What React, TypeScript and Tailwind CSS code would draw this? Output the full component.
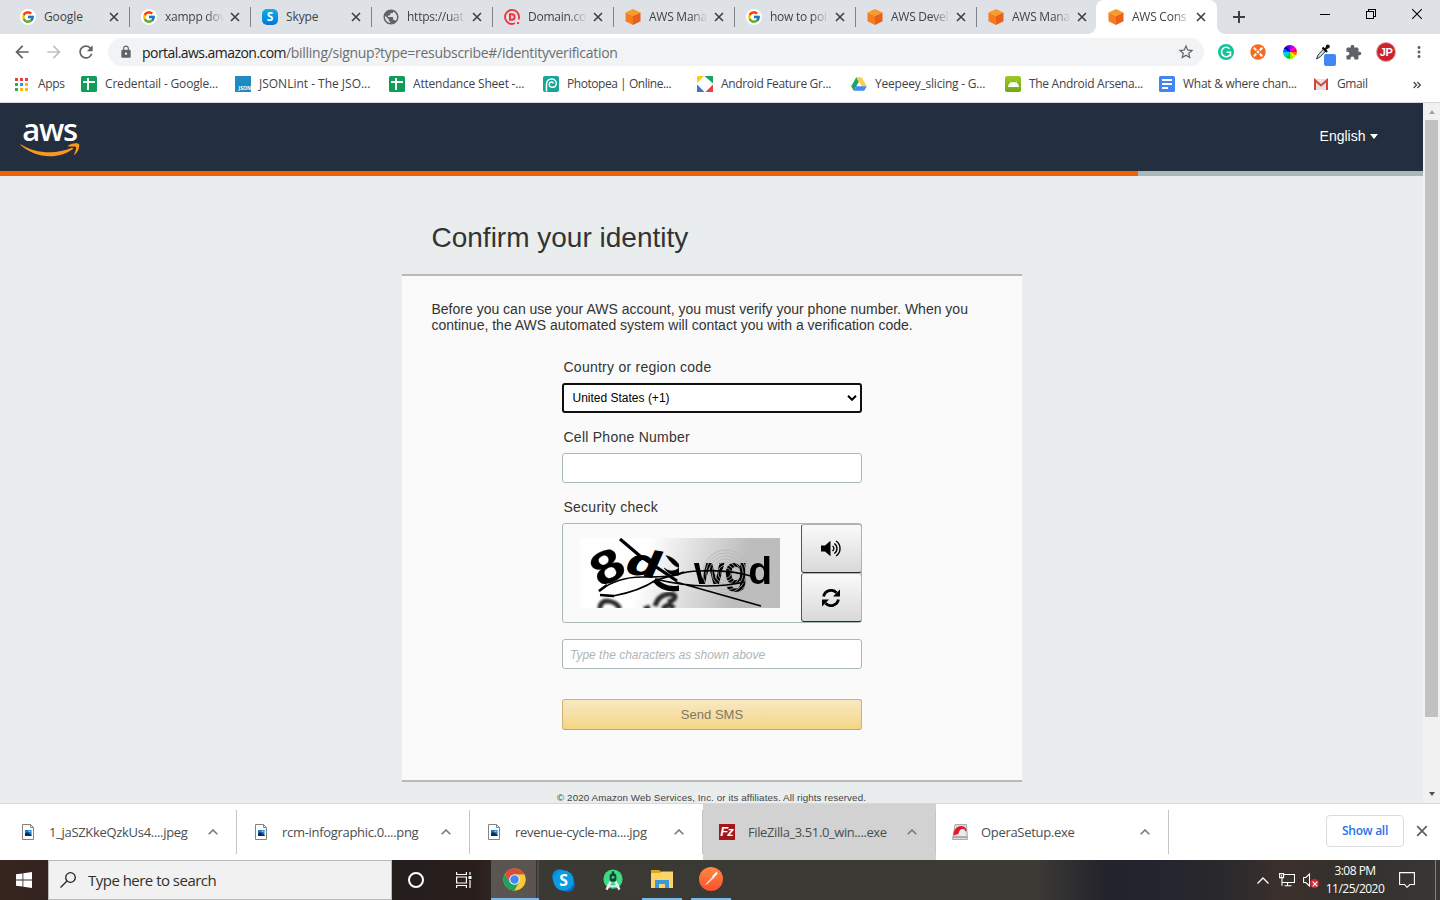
import type { ReactNode } from 'react';
import { FcGoogle } from 'react-icons/fc';
import { FaAndroid } from 'react-icons/fa';
import {
  MdArrowBack,
  MdArrowForward,
  MdRefresh,
  MdLock,
  MdStarBorder,
  MdExtension,
  MdMoreVert,
  MdPublic,
} from 'react-icons/md';

/* ---------- small icons ---------- */

function GoogleIcon() {
  return (
    <span className="flex size-4 items-center justify-center rounded-full bg-white">
      <FcGoogle className="size-[14px]" />
    </span>
  );
}

function SkypeIcon({ className = 'size-4' }: { className?: string }) {
  return (
    <svg viewBox="0 0 24 24" className={className}>
      <circle cx="8" cy="8" r="7.800" fill="#0c8ad8" />
      <circle cx="16.200" cy="16.200" r="7.600" fill="#0a6fc2" />
      <circle cx="12" cy="12" r="10.600" fill="#0a9be4" />
      <text x="12" y="17.800" textAnchor="middle" fontFamily="Open Sans, sans-serif" fontWeight="700" fontSize="16.500" fill="#fff">
        S
      </text>
    </svg>
  );
}

function SkypeTabIcon() {
  return (
    <span className="flex size-4 items-center justify-center rounded-[5px] bg-gradient-to-b from-[#12aeea] to-[#0578d4] font-['Open_Sans',sans-serif] text-[12px] leading-none font-bold text-white">
      S
    </span>
  );
}

function DomainIcon() {
  return (
    <svg viewBox="0 0 16 16" className="size-4">
      <path d="M11 14.300A7 7 0 1 1 15 8.500v2" fill="none" stroke="#f0333f" strokeWidth="1.800" />
      <path d="M6 5.200h1.800a2.800 2.800 0 0 1 0 5.600H6z" fill="none" stroke="#f0333f" strokeWidth="2" />
      <rect x="13" y="13" width="2" height="2" fill="#f0333f" />
    </svg>
  );
}

function CubeIcon() {
  return (
    <svg viewBox="0 0 16 16" className="size-4">
      <path d="M8 0l7.500 3.500L8 7 .5 3.500z" fill="#fa9a2c" />
      <path d="M.5 3.500L8 7v9L.5 12.300z" fill="#f47d20" />
      <path d="M15.500 3.500L8 7v9l7.500-3.700z" fill="#e8611c" />
    </svg>
  );
}

function SheetsIcon() {
  return (
    <svg viewBox="0 0 16 16" className="size-4">
      <rect width="16" height="16" rx="1.500" fill="#0f9d58" />
      <path d="M2 6h12M7 2v12" stroke="#fff" strokeWidth="2" />
    </svg>
  );
}

function JsonIcon() {
  return (
    <span className="flex size-4 items-end justify-end bg-[#1e8bc3] font-['Open_Sans',sans-serif] text-[5px] leading-[7px] font-bold text-white">
      JSON
    </span>
  );
}

function PhotopeaIcon() {
  return (
    <svg viewBox="0 0 16 16" className="size-4">
      <rect width="16" height="16" rx="2" fill="#18a497" />
      <path
        d="M3.500 15.500V8.300C3.500 4.800 5.800 3 8.600 3c2.700 0 4.700 1.800 4.700 4.300 0 2.400-1.800 4-4 4-1.900 0-3-1.200-3-2.800 0-1.400 1-2.400 2.300-2.400 1 0 1.600.7 1.600 1.500"
        fill="none"
        stroke="#fff"
        strokeWidth="1.500"
      />
    </svg>
  );
}

function FeatureIcon() {
  return (
    <svg viewBox="0 0 16 16" className="size-4">
      <path d="M1 0h6L0 7V1z" fill="#fbc91b" />
      <path d="M7.500 0H16v7.500z" fill="#1da260" />
      <path d="M0 8.500L7.500 16H0z" fill="#3f74c4" />
      <path d="M16 8.500V16H8.500z" fill="#ee3d3d" />
    </svg>
  );
}

function DriveIcon() {
  return (
    <svg viewBox="0 0 16 16" className="size-4">
      <path d="M5.300 1.200L.2 10.300l2.500 4.500L7.900 5.700z" fill="#1da462" />
      <path d="M5.300 1.200h5.300l5.200 9.100h-5.200z" fill="#ffcf48" />
      <path d="M5.300 10.300h10.500l-2.600 4.500H2.700z" fill="#4688f4" />
    </svg>
  );
}

function ArsenalIcon() {
  return (
    <span className="flex size-4 items-center justify-center rounded-[2px] bg-gradient-to-b from-[#9cca2b] to-[#76a70f]">
      <FaAndroid className="size-[11px] text-white" />
    </span>
  );
}

function DocsIcon() {
  return (
    <svg viewBox="0 0 16 16" className="size-4">
      <rect width="16" height="16" rx="1.500" fill="#4285f4" />
      <path d="M3 4h10M3 8h10M3 12h6" stroke="#fff" strokeWidth="2" />
    </svg>
  );
}

function GmailIcon() {
  return (
    <svg viewBox="0 0 16 16" className="size-4">
      <path d="M1 3h14v11H1z" fill="#e4e2e2" />
      <path d="M2 14V4.300L8 9.500l6-5.200V14" fill="none" stroke="#d44638" strokeWidth="2" />
    </svg>
  );
}

function AppsIcon() {
  const colors = ['#ea4335', '#ea4335', '#ea4335', '#34a853', '#4285f4', '#fbbc05', '#34a853', '#fbbc05', '#fbbc05'];
  return (
    <svg viewBox="0 0 13 13" className="size-[13px]">
      {colors.map((c, i) => (
        <rect key={i} x={(i % 3) * 5} y={Math.floor(i / 3) * 5} width="3" height="3" fill={c} />
      ))}
    </svg>
  );
}

function CloseX({ className }: { className: string }) {
  return (
    <svg viewBox="0 0 10 10" className={className} fill="none" stroke="currentColor">
      <path d="M1 1l8 8M9 1l-8 8" />
    </svg>
  );
}

/* ---------- browser chrome ---------- */

type TabInfo = { title: string; icon: ReactNode; active?: boolean; divider?: boolean };

const tabs: TabInfo[] = [
  { title: 'Google', icon: <GoogleIcon /> },
  { title: 'xampp dov', icon: <GoogleIcon />, divider: true },
  { title: 'Skype', icon: <SkypeTabIcon />, divider: true },
  { title: 'https://uat', icon: <MdPublic className="size-[18px] -m-px text-[#5f6368]" />, divider: true },
  { title: 'Domain.co', icon: <DomainIcon />, divider: true },
  { title: 'AWS Mana', icon: <CubeIcon />, divider: true },
  { title: 'how to poi', icon: <GoogleIcon />, divider: true },
  { title: 'AWS Devel', icon: <CubeIcon />, divider: true },
  { title: 'AWS Mana', icon: <CubeIcon />, divider: true },
  { title: 'AWS Cons', icon: <CubeIcon />, active: true },
];

function Tab({ tab }: { tab: TabInfo }) {
  const short = tab.title.length < 8;
  return (
    <div className={`relative flex h-[34px] w-[121px] shrink-0 items-center ${tab.active ? '-ml-px rounded-t-lg bg-white' : ''}`}>
      {tab.active && (
        <>
          <span className="absolute bottom-0 -left-2 size-2 bg-[radial-gradient(circle_at_0_0,#dee1e6_7.500px,#fff_8px)]" />
          <span className="absolute -right-2 bottom-0 size-2 bg-[radial-gradient(circle_at_100%_0,#dee1e6_7.500px,#fff_8px)]" />
        </>
      )}
      <span className={`h-5 w-px ${tab.divider ? 'bg-[#808389]' : ''}`} />
      <span className="ml-[11px] flex size-4 shrink-0 items-center justify-center">{tab.icon}</span>
      <span
        className={`ml-2 w-[59px] text-[12px] whitespace-nowrap text-[#3f4347] ${
          short ? 'tracking-[-0.100px]' : 'tracking-[-0.250px] [mask-image:linear-gradient(to_right,#000_70%,transparent)]'
        }`}
      >
        {tab.title}
      </span>
      <CloseX className={`size-[10px] stroke-[1.600] text-[#3c4043] ${tab.active ? 'ml-[5px]' : 'ml-[6px]'}`} />
    </div>
  );
}

function TabStrip() {
  return (
    <div className="flex h-[34px] items-center bg-[#dee1e6] pl-2">
      {tabs.map((t, i) => (
        <Tab key={i} tab={t} />
      ))}
      <svg viewBox="0 0 12 12" className="ml-4 size-3 stroke-[#3c4043] stroke-2">
        <path d="M6 0v12M0 6h12" />
      </svg>
      <div className="ml-auto flex h-[34px] items-center pb-[6px] text-black">
        <span className="flex w-[46px] justify-center">
          <span className="h-px w-[10px] bg-black" />
        </span>
        <span className="flex w-[46px] justify-center">
          <svg viewBox="0 0 10 10" className="size-[10px]" fill="none" stroke="currentColor" shapeRendering="crispEdges">
            <path d="M.5 2.500h7v7h-7zM2.500 2.500v-2h7v7h-2" />
          </svg>
        </span>
        <span className="flex w-[46px] justify-center">
          <CloseX className="size-3 stroke-[0.900]" />
        </span>
      </div>
    </div>
  );
}

function Toolbar() {
  return (
    <div className="flex h-9 items-center bg-white pl-3 text-[#5f6368]">
      <MdArrowBack className="size-5" />
      <MdArrowForward className="ml-3 size-5 text-[#bdc1c6]" />
      <MdRefresh className="ml-3 size-5" />
      <div className="ml-3 flex h-7 w-[1096px] items-center rounded-full bg-[#f1f3f4] pl-[11px]">
        <MdLock className="mb-px size-[14px]" />
        <span className="ml-[9px] text-[14px] tracking-[-0.290px] text-[#6b6f74]">
          <span className="tracking-[-0.550px] text-[#202124]">portal.aws.amazon.com</span>/billing/signup?type=resubscribe#/identityverification
        </span>
        <MdStarBorder className="mr-[9px] ml-auto size-[18px]" />
      </div>
      <span className="ml-[14px] flex size-4 items-center justify-center rounded-full bg-[#15c39a]">
        <svg viewBox="0 0 16 16" className="size-4" fill="none" stroke="#fff" strokeWidth="1.500">
          <path d="M11.500 4.700A4.700 4.700 0 1 0 12 10.800M8.500 8.300h4v4" />
        </svg>
      </span>
      <svg viewBox="0 0 16 16" className="ml-4 size-4">
        <circle cx="8" cy="8" r="7.700" fill="#f66a1f" />
        <g fill="#fff">
          <path d="M3 4.500L4.500 3l2.500 2.500-1.500 1.500zM13 4.500L11.500 3 9 5.500 10.500 7zM3 11.500L4.500 13 7 10.500 5.500 9zM13 11.500L11.500 13 9 10.500 10.500 9z" />
          <circle cx="8" cy="8" r="1.400" />
        </g>
      </svg>
      <span className="ml-[17px] size-[14px] rounded-full bg-[conic-gradient(#a0f_0_30deg,#f0c_0_60deg,#f04_0_90deg,#f70_0_120deg,#ee0_0_150deg,#8e0_0_180deg,#0c2_0_210deg,#0d8_0_240deg,#0cf_0_270deg,#06f_0_300deg,#00c_0_330deg,#60c_0)]" />
      <span className="relative ml-[18px] size-4">
        <svg viewBox="0 0 16 16" className="size-4">
          <path d="M1.500 15L3 11l6-6.500 2 2L5.500 12.500z" fill="#cfe0d8" stroke="#273a35" strokeWidth="1" />
          <path d="M7.500 3.500l4.500 4.500M9.500 6L13 2.500" stroke="#111" strokeWidth="2.400" />
          <circle cx="12.800" cy="2.400" r="2" fill="#111" />
        </svg>
        <span className="absolute top-[10px] left-[9px] size-3 rounded-[2px] bg-[#4285f4]" />
      </span>
      <MdExtension className="ml-[14px] size-[17px]" />
      <span className="ml-[14px] flex size-5 items-center justify-center rounded-full border border-[#eba3a6] bg-[#c8242b] font-['Liberation_Sans',sans-serif] text-[11px] leading-none font-bold tracking-[-0.500px] text-white">
        JP
      </span>
      <MdMoreVert className="ml-[14px] size-[18px]" />
    </div>
  );
}

const bookmarks: { label: string; icon: ReactNode; spacing: string }[] = [
  { label: 'Credentail - Google...', icon: <SheetsIcon />, spacing: 'tracking-[-0.170px]' },
  { label: 'JSONLint - The JSO...', icon: <JsonIcon />, spacing: 'tracking-[-0.010px]' },
  { label: 'Attendance Sheet -...', icon: <SheetsIcon />, spacing: 'tracking-[-0.200px]' },
  { label: 'Photopea | Online...', icon: <PhotopeaIcon />, spacing: 'tracking-[-0.450px]' },
  { label: 'Android Feature Gr...', icon: <FeatureIcon />, spacing: 'tracking-[-0.330px]' },
  { label: 'Yeepeey_slicing - G...', icon: <DriveIcon />, spacing: 'tracking-[-0.220px]' },
  { label: 'The Android Arsena...', icon: <ArsenalIcon />, spacing: 'tracking-[-0.300px]' },
  { label: 'What & where chan...', icon: <DocsIcon />, spacing: 'tracking-[-0.270px]' },
  { label: 'Gmail', icon: <GmailIcon />, spacing: 'tracking-[-0.400px]' },
];

function BookmarksBar() {
  return (
    <div className="flex h-[33px] items-center border-b border-[#d5d7da] bg-white pb-1 text-[12px] text-[#3f4347]">
      <div className="flex w-[81px] shrink-0 items-center pl-[15px]">
        <AppsIcon />
        <span className="ml-[10px] tracking-[-0.300px]">Apps</span>
      </div>
      {bookmarks.map((b, i) => (
        <div key={i} className={`flex shrink-0 items-center ${i < 8 ? 'w-[154px]' : 'w-[100px]'}`}>
          {b.icon}
          <span className={`ml-2 whitespace-nowrap ${b.spacing}`}>{b.label}</span>
        </div>
      ))}
      <svg viewBox="0 0 8 8" className="mt-px size-2" fill="none" stroke="#4a4d51" strokeWidth="1.400">
        <path d="M.7 1l2.800 3L.7 7M4.400 1l2.800 3-2.800 3" />
      </svg>
    </div>
  );
}

/* ---------- page ---------- */

function AwsLogo() {
  return (
    <div className="flex w-[60px] flex-col items-center">
      <span className="-mt-px -ml-[1px] h-[27px] font-['Open_Sans',sans-serif] text-[31px] leading-[26px] font-semibold tracking-[-1.300px] text-white">
        aws
      </span>
      <svg viewBox="0 0 60 14" className="h-[14px] w-[60px]">
        <path d="M.4 1.200C9 6.500 19 9.300 30 9.300c7.500 0 15-1.600 21.800-4.500 1.100-.4 1.900.7.900 1.500C46.500 10.800 38 13.300 30 13.300c-11.500 0-21.500-4.300-29.500-11.200-.5-.5-.6-1.100-.1-.9z" fill="#f7981f" />
        <path d="M48.500 2.200C51.300.2 57.500-.4 58.900.9c1.200 1.500-.4 7.800-3.900 10.700-.6.400-1.100.2-.8-.4.800-2 2.500-6.100 1.700-7.100-.8-1-4.900-.7-7.100-.5-.7.100-.8-.5-.3-1.400z" fill="#f7981f" />
      </svg>
    </div>
  );
}

function CaptchaArt() {
  return (
    <svg viewBox="0 0 200 70" className="h-[70px] w-[200px]">
      <defs>
        <linearGradient id="cbg" x1="0" x2="1" y1="0" y2="0.100">
          <stop offset="0.350" stopColor="#fefefe" />
          <stop offset="0.850" stopColor="#bdbdbd" />
        </linearGradient>
        <clipPath id="cleft">
          <rect width="99" height="70" />
        </clipPath>
        <filter id="cblur">
          <feGaussianBlur stdDeviation="0.800" />
        </filter>
        <filter id="csoft">
          <feGaussianBlur stdDeviation="0.700 0.300" />
        </filter>
      </defs>
      <rect width="200" height="70" fill="url(#cbg)" />
      <g clipPath="url(#cleft)" fontFamily="Liberation Sans, sans-serif" fontWeight="700" stroke="#000">
        <text transform="translate(27 28.500) rotate(-28) scale(1.250 1)" y="16" textAnchor="middle" fontSize="46" strokeWidth="0.300">8</text>
        <text transform="translate(59 37) rotate(10) skewX(-14) scale(1.450 1)" textAnchor="middle" fontSize="37" strokeWidth="1">d</text>
        <path d="M86 17.500q8 2 13 9l0 3q-6-1-13-12zM84 30q8 6 15 0v7q-9 2-15-7z" strokeWidth="0.500" />
        <path d="M75 42q9 11 25 8" fill="none" strokeWidth="5.500" />
        <g filter="url(#cblur)" fill="none" stroke="#2c2c2c" strokeWidth="5">
          <path d="M20 71C19 60 35 61 40 71M64 71l6-2M75 68C79 54 95 54 95 59Q95 62 88 64M83 71Q88 64 94 70" />
        </g>
      </g>
      <g filter="url(#csoft)">
        <text
          x="114"
          y="46"
          fontFamily="Liberation Sans, sans-serif"
          fontWeight="700"
          fontSize="38"
          textLength="78"
          lengthAdjust="spacingAndGlyphs"
        >
          wgd
        </text>
      </g>
      <g fill="none" stroke="#b5b5b5" strokeWidth="0.800">
        <circle cx="146" cy="35" r="5" />
        <circle cx="146" cy="35" r="8" />
        <circle cx="146" cy="35" r="11" />
        <circle cx="146" cy="35" r="14" />
        <circle cx="146" cy="35" r="17" />
        <circle cx="146" cy="35" r="20" />
        <circle cx="146" cy="35" r="23" />
      </g>
      <path d="M40 1L60 18 97 43" fill="none" stroke="#000" strokeWidth="3.200" />
      <path
        d="M19 53Q37 39 62 39T97 37Q106 33 120 33Q147 31 175 39M20 57L33 58Q60 53 76 42Q96 37 104 34M75 41Q104 48 126 48T164 44M96 44L181 68"
        fill="none"
        stroke="#000"
        strokeWidth="1.600"
      />
      <path d="M19 53l8-6M20 57l14 1" stroke="#000" strokeWidth="2.600" />
    </svg>
  );
}

function CaptchaButton({ children }: { children: ReactNode }) {
  return (
    <button className="flex flex-1 items-center justify-center rounded-[3px] border border-[#adb1b8] border-b-[#2b2b2b] border-l-[#555] bg-gradient-to-b from-[#fafafa] to-[#d9d9d9] pr-[2px] text-black">
      {children}
    </button>
  );
}

function VolumeIcon() {
  return (
    <svg viewBox="0 0 20 17" className="h-[17px] w-5">
      <path d="M0 5.500h4L9.500.8v15.400L4 11.500H0z" fill="#000" />
      <path d="M11.500 6a3 3 0 0 1 0 5M13.300 3.500a6 6 0 0 1 0 10M15 1a9 9 0 0 1 0 15" fill="none" stroke="#000" strokeWidth="1.400" />
    </svg>
  );
}

function RefreshIcon() {
  return (
    <svg viewBox="0 0 18 18" className="size-[18px]">
      <path d="M1.600 7.500A7.600 7.600 0 0 1 14.500 3.700M16.400 10.500A7.600 7.600 0 0 1 3.500 14.300" fill="none" stroke="#000" strokeWidth="2.800" />
      <path d="M18 .5v7h-7zM0 17.500v-7h7z" fill="#000" />
    </svg>
  );
}

function VerificationCard() {
  return (
    <section className="h-[508px] w-[620px] border-y-2 border-[#b8b9b9] bg-[#fafafa] px-[30px] pt-[25px] text-[14px] text-[#333]">
      <p className="-ml-[0.500px] leading-4 whitespace-nowrap">
        Before you can use your AWS account, you must verify your phone number. When you
        <br />
        continue, the AWS automated system will contact you with a verification code.
      </p>
      <form className="mx-auto mt-[26px] flex w-[300px] flex-col">
        <label className="pl-[1.500px] leading-4 tracking-[0.250px]">Country or region code</label>
        <div className="mt-2 flex h-[30px] items-center justify-between rounded-[3px] border-2 border-[#101010] bg-white pr-[3px] pl-[8.500px] text-[12px] text-black">
          <span>United States (+1)</span>
          <svg viewBox="0 0 10 6" className="w-[10px]" fill="none" stroke="#000" strokeWidth="2">
            <path d="M1 .8l4 4 4-4" />
          </svg>
        </div>
        <label className="mt-4 pl-[1.500px] leading-4 tracking-[0.250px]">Cell Phone Number</label>
        <input className="mt-2 h-[30px] rounded-[3px] border border-[#aab7b8] bg-white" />
        <label className="mt-4 pl-[1.500px] leading-4 tracking-[0.250px]">Security check</label>
        <div className="mt-2 flex h-[100px] rounded-[3px] border border-[#aab7b8]">
          <div className="flex flex-1 items-start pt-[14px] pl-[17px]">
            <CaptchaArt />
          </div>
          <div className="-mr-px flex w-[61px] flex-col">
            <CaptchaButton>
              <VolumeIcon />
            </CaptchaButton>
            <CaptchaButton>
              <RefreshIcon />
            </CaptchaButton>
          </div>
        </div>
        <input
          className="mt-4 h-[30px] rounded-[3px] border border-[#aab7b8] bg-white px-[7px] pt-px text-[12px] placeholder:text-[#b1b5b6] placeholder:italic"
          placeholder="Type the characters as shown above"
        />
        <button
          type="button"
          className="mt-[30px] h-[31px] rounded-[3px] border border-[#d0b277] border-b-[#c4a568] bg-gradient-to-b from-[#f9e8c1] to-[#f4d686] text-[13px] tracking-[0.020px] text-[#7e7768]"
        >
          Send SMS
        </button>
      </form>
    </section>
  );
}

function Page() {
  return (
    <div className="flex h-[700px]">
      <main className="flex h-full w-[1423px] flex-col overflow-hidden bg-[#e9eded] font-['Liberation_Sans',Arial,sans-serif]">
        <header className="flex h-[68px] shrink-0 items-center justify-between bg-[#232f3e] pr-[45.500px] pl-5">
          <AwsLogo />
          <div className="flex items-center pb-[2px] text-[14px] text-white">
            English
            <span className="ml-1 border-x-[4.500px] border-t-[5px] border-x-transparent border-t-white" />
          </div>
        </header>
        <div className="h-[5px] shrink-0 bg-[#aab7b8]">
          <div className="h-full w-[1138px] bg-[#ec6207]" />
        </div>
        <div className="flex flex-col pl-[402px]">
          <h1 className="mt-[44px] h-[54px] pl-[29.500px] text-[28px] leading-[35px] text-[#333]">Confirm your identity</h1>
          <VerificationCard />
          <p className="mt-[10px] w-[619px] text-center text-[9.800px] leading-3 tracking-[0.090px] text-[#444]">
            © 2020 Amazon Web Services, Inc. or its affiliates. All rights reserved.
          </p>
        </div>
      </main>
      <div className="flex w-[17px] flex-col items-center bg-[#f1f1f1]">
        <span className="mt-[7px] border-x-[3.500px] border-b-4 border-x-transparent border-b-[#a3a3a3]" />
        <span className="mt-[6px] h-[597px] w-[13px] bg-[#c1c1c1]" />
        <span className="mt-auto mb-[7px] border-x-[3.500px] border-t-4 border-x-transparent border-t-[#505050]" />
      </div>
    </div>
  );
}

/* ---------- downloads shelf ---------- */

function ImageFileIcon() {
  return (
    <svg viewBox="0 0 12 16" className="h-4 w-3">
      <path d="M.5.5h8l3 3v12H.5z" fill="#fff" stroke="#848484" />
      <path d="M8.500.5v3h3" fill="none" stroke="#848484" />
      <rect x="3" y="6" width="6.500" height="6" fill="#1a79c9" />
      <path d="M3 12V9.500l2-1.500 4.500 3v1z" fill="#0b2c5c" />
      <rect x="6.500" y="6.500" width="2" height="1.500" fill="#7ad0f5" />
    </svg>
  );
}

function FileZillaIcon() {
  return (
    <span className="flex size-4 items-center justify-center bg-[#a3161b] pr-px font-['Liberation_Sans',sans-serif] text-[13px] leading-none font-bold tracking-[-1px] text-white italic">
      Fz
    </span>
  );
}

function OperaIcon() {
  return (
    <svg viewBox="0 0 16 16" className="size-4">
      <path d="M3 .5h11.500l1 15H.5z" fill="#dcdcdc" stroke="#9a9a9a" strokeWidth="0.800" />
      <path d="M1.500 11.500C1.500 5.500 5 2 9 2s5.500 3 5.500 5z" fill="#e0192d" />
      <path d="M6.500 12c0-4.500 1.500-7 4-7s3.500 2.500 3.500 7z" fill="#ececec" />
      <path d="M1 13h14" stroke="#8b8b8b" strokeWidth="1.200" />
    </svg>
  );
}

const downloads: { name: string; icon: ReactNode; hover?: boolean }[] = [
  { name: '1_jaSZKkeQzkUs4....jpeg', icon: <ImageFileIcon /> },
  { name: 'rcm-infographic.0....png', icon: <ImageFileIcon /> },
  { name: 'revenue-cycle-ma....jpg', icon: <ImageFileIcon /> },
  { name: 'FileZilla_3.51.0_win....exe', icon: <FileZillaIcon />, hover: true },
  { name: 'OperaSetup.exe', icon: <OperaIcon /> },
];

function DownloadShelf() {
  return (
    <div className="flex h-[57px] items-center border-t border-[#d6d8da] bg-white text-[#4a4d51]">
      <div className="flex h-full pl-[3.500px]">
        {downloads.map((d) => (
          <div key={d.name} className={`flex h-full w-[233px] items-center ${d.hover ? 'bg-[#d2d2d2]' : ''}`}>
            <span className="mb-px ml-[16.500px] flex w-4 justify-center">{d.icon}</span>
            <span className={`mt-px ml-[13px] w-[150px] text-[13px] whitespace-nowrap ${d.hover ? 'tracking-[-0.400px]' : 'tracking-[-0.310px]'}`}>
              {d.name}
            </span>
            <svg viewBox="0 0 10 6" className="ml-[8.500px] w-[10px]" fill="none" stroke="#75787c" strokeWidth="1.600">
              <path d="M.7 5.300L5 1l4.300 4.300" />
            </svg>
            <span className="ml-auto h-11 w-px bg-[#c6c6c6]" />
          </div>
        ))}
      </div>
      <button className="mr-3 mb-[2px] ml-auto h-8 w-[78px] rounded-[4px] border border-[#dadce0] text-[12px] font-semibold tracking-[-0.250px] text-[#2a72e8]">
        Show all
      </button>
      <CloseX className="mr-[12px] mb-[2px] size-3 stroke-[1.500] text-[#5f6368]" />
    </div>
  );
}

/* ---------- taskbar ---------- */

function ChromeIcon() {
  return (
    <svg viewBox="0 0 24 24" className="size-[23px]">
      <circle cx="12" cy="12" r="11.500" fill="#fbc934" />
      <path d="M12 6.500h10L12 23.500a11.500 11.500 0 0 1-10-17.250l5.200 8.500z" fill="#1da261" />
      <path d="M12 6.500h10.100A11.500 11.500 0 0 1 12 23.500l4.800-8.700z" fill="#fbc934" />
      <path d="M2.040 6.250A11.500 11.500 0 0 1 22.100 6.500H12L7.200 14.800z" fill="#dd4b3e" />
      <circle cx="12" cy="12" r="5.500" fill="#f1f1f1" />
      <circle cx="12" cy="12" r="4.400" fill="#4386f5" />
    </svg>
  );
}

function AndroidStudioIcon() {
  return (
    <svg viewBox="0 0 24 24" className="size-[22px]">
      <circle cx="12" cy="11" r="10.500" fill="#3ddc84" />
      <path d="M9.500 13.500L5 22.500M14.500 13.500L19 22.500" stroke="#e8f1f5" strokeWidth="2.600" />
      <path d="M6 17q6 4 12 0" fill="none" stroke="#e8f1f5" strokeWidth="1.800" />
      <rect x="8.300" y="4.500" width="7.400" height="9.500" rx="3.500" fill="#14463a" />
      <rect x="10.700" y="2.500" width="2.600" height="4" fill="#14463a" />
      <circle cx="12" cy="9" r="1.500" fill="#3ddc84" />
    </svg>
  );
}

function FolderIcon() {
  return (
    <svg viewBox="0 0 22 19" className="h-[19px] w-[22px]">
      <path d="M0 0h8.500l1.500 2v4H0z" fill="#e2a316" />
      <path d="M0 3h9l1.500-1.500H22V18H0z" fill="#fcd468" />
      <path d="M4 18v-8h14v8h-4v-4H8v4z" fill="#3c98dc" />
    </svg>
  );
}

function PostmanIcon() {
  return (
    <svg viewBox="0 0 24 24" className="size-6">
      <defs>
        <linearGradient id="pm" x1="0" x2="0" y1="0" y2="1">
          <stop offset="0" stopColor="#ff8a42" />
          <stop offset="1" stopColor="#fb4f2c" />
        </linearGradient>
      </defs>
      <circle cx="12" cy="12" r="12" fill="url(#pm)" />
      <path d="M5.500 18.500l2.500-3 6.500-7 1.500 1.500-7 6.500z" fill="#ffd9c9" />
      <path d="M14.500 9.200l3-3" stroke="#fff" strokeWidth="2.200" strokeLinecap="round" />
    </svg>
  );
}

function Taskbar() {
  return (
    <div className="flex h-10 items-center bg-[linear-gradient(to_right,#38251f_0,#30221e_5%,#241e1d_27.500%,#2a1e1c_33%,#3b3933_37.500%,#3b3a35_72%,#22222a_77%,#24262f_81%,#2a292b_85%,#3c302c_89%,#34302c_93%,#383734_100%)] text-white">
      <span className="flex w-12 justify-center">
        <svg viewBox="0 0 16 16" className="size-4" fill="#fff">
          <path d="M0 2.300L6.500 1.400v6.200H0zM7.300 1.300L16 0v7.600H7.300zM0 8.400h6.500v6.200L0 13.700zM7.300 8.400H16V16l-8.700-1.300z" />
        </svg>
      </span>
      <div className="flex h-full w-[344px] items-center border border-[#b9b9b9] bg-[#f1f1f1] pl-[11px]">
        <svg viewBox="0 0 16 16" className="size-4" fill="none" stroke="#222" strokeWidth="1.300">
          <circle cx="10.500" cy="5.500" r="4.800" />
          <path d="M7 9L.5 15.500" />
        </svg>
        <span className="mt-px ml-3 text-[15px] tracking-[-0.520px] text-[#2f2f2f]">Type here to search</span>
      </div>
      <span className="ml-4 size-4 rounded-full border-2 border-white" />
      <svg viewBox="0 0 16 16" className="ml-8 size-4" fill="none" stroke="#fff" strokeWidth="1.200">
        <path d="M.6 0v2.500h9.800V0M.6 16v-2.500h9.800V16M.6 5h9.800v6H.6zM14 0v3M14 8v8" />
        <path d="M12.500 5.500h3" strokeWidth="3" />
      </svg>
      <div className="ml-[19px] flex h-full border-b-2 border-[#76b9ed]">
        <span className="flex w-[45px] items-center justify-center bg-[#5b5551] pl-[2px]">
          <ChromeIcon />
        </span>
        <span className="w-[3px] border-l border-[#37322f] bg-[#4d4945]" />
      </div>
      <SkypeIcon className="ml-[13px] size-[23px]" />
      <span className="ml-[27px]">
        <AndroidStudioIcon />
      </span>
      <span className="ml-[18px] flex h-full w-10 items-center justify-center border-b-2 border-[#76b9ed]">
        <FolderIcon />
      </span>
      <span className="ml-[9px] flex h-full w-10 items-center justify-center border-b-2 border-[#76b9ed]">
        <PostmanIcon />
      </span>
      <div className="ml-auto flex h-full items-center">
        <svg viewBox="0 0 12 7" className="w-3" fill="none" stroke="#fff" strokeWidth="1.300">
          <path d="M.5 6.500L6 1l5.500 5.500" />
        </svg>
        <svg viewBox="0 0 16 14" className="ml-[10px] h-[14px] w-4" fill="none" stroke="#fff" strokeWidth="1.100">
          <path d="M5 1.500h10.500v8H3M8.500 9.500v3M5.500 12.800h7M3 4.500v8.300M.6.600h4v4h-4zM2.600 2v1.500" />
        </svg>
        <span className="relative ml-2 h-4 w-4">
          <svg viewBox="0 0 16 16" className="size-4" fill="none" stroke="#fff" strokeWidth="1.100">
            <path d="M.6 5.500h2.200L6.500 2v12L2.800 10.500H.6z" />
          </svg>
          <span className="absolute top-[7px] left-[7px] flex size-[9px] items-center justify-center rounded-full bg-[#d9252f] text-white">
            <CloseX className="size-[6px] stroke-2" />
          </span>
        </span>
        <div className="ml-[6px] w-[60px] text-center text-[12px] leading-[18px] tracking-[-0.520px] whitespace-nowrap">
          3:08 PM
          <br />
          11/25/2020
        </div>
        <svg viewBox="0 0 16 16" className="mr-5 ml-[14px] size-4" fill="none" stroke="#fff" strokeWidth="1.100">
          <path d="M.6.600h14.800v11.900h-4.500L8 15.300 5.500 12.500H.6z" />
        </svg>
        <span className="mr-1 h-full w-px bg-[#85827f]" />
      </div>
    </div>
  );
}

export default function App() {
  return (
    <div className="flex h-[900px] w-[1440px] flex-col overflow-hidden bg-white font-['Open_Sans','Noto_Sans',sans-serif]">
      <TabStrip />
      <Toolbar />
      <BookmarksBar />
      <Page />
      <DownloadShelf />
      <Taskbar />
    </div>
  );
}
